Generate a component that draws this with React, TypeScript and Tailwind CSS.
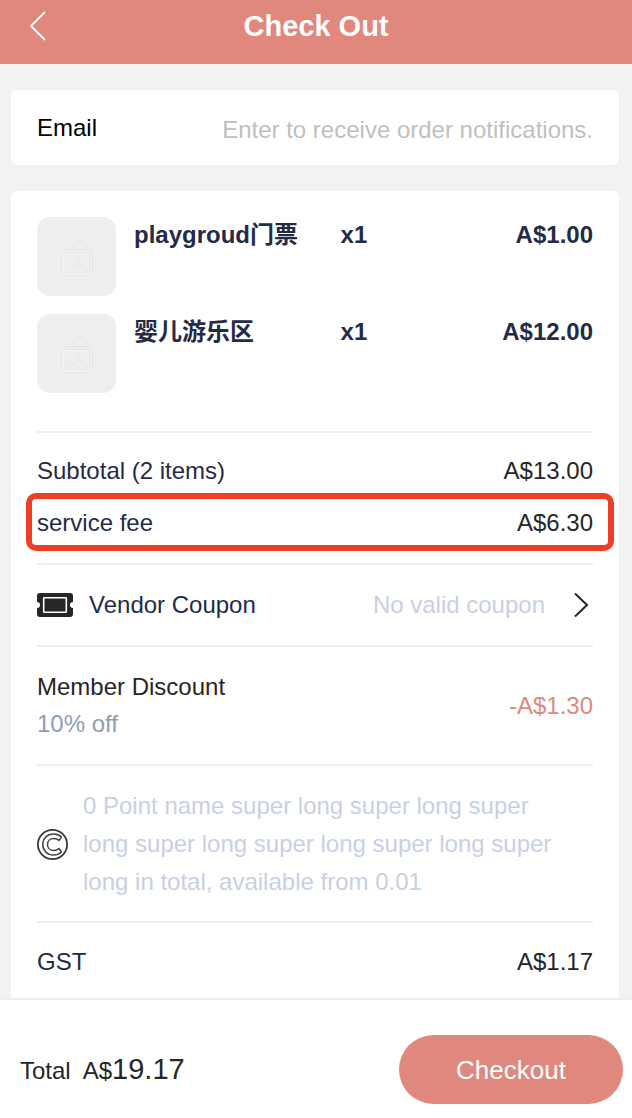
import type { ReactNode } from "react";

type Item = { id: number; name: string; qty: number; price: string };

const items: Item[] = [
  { id: 1, name: "playgroud门票", qty: 1, price: "A$1.00" },
  { id: 2, name: "婴儿游乐区", qty: 1, price: "A$12.00" },
];

function PicturePlaceholder() {
  return (
    <div className="flex h-[79px] w-[79px] shrink-0 items-center justify-center rounded-[13px] bg-[#eeeeee]">
      <svg viewBox="0 0 40 44" className="h-11 w-10" fill="none" stroke="#e6e6e6" strokeWidth="1" aria-hidden="true">
        <circle cx="23" cy="5" r="2" fill="#e8e8e8" stroke="none" />
        <path d="M21 7 L10 14 M25 7 L33 14" />
        <path d="M8 14.500 H35.500 V37" />
        <rect x="4.500" y="17.500" width="28" height="23" />
        <rect x="5.500" y="18.500" width="26" height="21" stroke="#f4f4f4" />
        <circle cx="20.500" cy="24.500" r="2.500" />
        <path d="M12 28 C12 33 17 33 20 30 C23 28 26 29 28 33 L31 39" />
      </svg>
    </div>
  );
}

function CouponIcon() {
  return (
    <svg viewBox="0 0 36 24" className="h-6 w-9 shrink-0" aria-hidden="true">
      <path
        fill="#262626"
        d="M3 0 H33 Q36 0 36 3 V9 A3 3 0 0 0 36 15 V21 Q36 24 33 24 H3 Q0 24 0 21 V15 A3 3 0 0 0 0 9 V3 Q0 0 3 0 Z"
      />
      <rect x="6.700" y="4.700" width="22.600" height="14.600" rx="0.500" fill="none" stroke="#fff" strokeWidth="1.600" />
    </svg>
  );
}

function PointIcon() {
  return (
    <svg viewBox="0 0 31 31" className="h-[31px] w-[31px] shrink-0" fill="none" stroke="#444" aria-hidden="true">
      <circle cx="15.500" cy="15.500" r="14.600" strokeWidth="1.800" stroke="#3a3a3a" />
      <path
        strokeWidth="1.500"
        strokeLinejoin="round"
        d="M24.500 8 C22.500 6 19.800 5 16.500 5 C10 5 5.800 9.500 5.800 15.500 C5.800 21.500 10 26 16.500 26 C19.800 26 22.500 25 24.500 23 L22 19.500 C20.500 21 18.800 21.500 16.800 21.500 C13 21.500 10.500 19 10.500 15.500 C10.500 12 13 9.500 16.800 9.500 C18.800 9.500 20.500 10 22 11.500 Z"
      />
    </svg>
  );
}

function Section({ className = "", children }: { className?: string; children: ReactNode }) {
  return <section className={`border-t-2 border-[#eeeeee] ${className}`}>{children}</section>;
}

export default function App() {
  return (
    <div className="flex min-h-screen flex-col bg-[#f2f2f2] font-['Liberation_Sans','Noto_Sans_CJK_SC',sans-serif] text-[24px] leading-9 text-[#262626]">
      <header className="grid grid-cols-[1fr_auto_1fr] items-center bg-[#e0887d] px-7 pt-2 pb-5 text-white">
        <button type="button" aria-label="Back" className="justify-self-start">
          <svg viewBox="0 0 20 32" className="h-8 w-5" fill="none" stroke="currentColor" strokeWidth="2" aria-hidden="true">
            <path d="M17 2 L3 16 L17 30" />
          </svg>
        </button>
        <h1 className="text-[29px] leading-9 font-bold">Check Out</h1>
      </header>

      <main className="flex flex-1 flex-col gap-[26px] pt-[26px] pr-[13px] pl-[11px]">
        <div className="flex items-start rounded-md bg-white px-[26px] pt-5 pb-[17px]">
          <label htmlFor="email" className="text-black">
            Email
          </label>
          <input
            id="email"
            type="email"
            placeholder="Enter to receive order notifications."
            className="mt-0.5 h-9 min-w-0 flex-1 text-right outline-none placeholder:text-[#bfbfbf]"
          />
        </div>

        <div className="flex-1 rounded-t-md bg-white px-[26px] pt-[26px]">
          <ul className="flex flex-col gap-[18px] pb-[38px] font-bold text-[#252b46]">
            {items.map((item) => (
              <li key={item.id} className="flex gap-[18px]">
                <PicturePlaceholder />
                <div className="flex flex-1 items-start">
                  <span className="w-[45%]">{item.name}</span>
                  <span>x{item.qty}</span>
                  <span className="ml-auto">{item.price}</span>
                </div>
              </li>
            ))}
          </ul>

          <Section className="pt-3 pb-3.5 leading-[52px]">
            <div className="flex justify-between">
              <span className="text-[#252b46]">Subtotal (2 items)</span>
              <span>A$13.00</span>
            </div>
            <div className="relative flex justify-between">
              <span className="text-[#252b46]">service fee</span>
              <span>A$6.30</span>
              {/* highlight frame around the fee */}
              <div className="pointer-events-none absolute -top-1 -right-[21px] -bottom-0.5 -left-[11px] rounded-[10px] border-6 border-[#ec4026]" />
            </div>
          </Section>

          <Section>
            <button type="button" className="flex w-full items-center py-[22px] pr-1 text-left">
              <CouponIcon />
              <span className="ml-4 text-[#252b46]">Vendor Coupon</span>
              <span className="ml-auto text-[#c8d0e3]">No valid coupon</span>
              <svg viewBox="0 0 16 26" className="ml-7 h-[26px] w-4" fill="none" stroke="#262626" strokeWidth="2" aria-hidden="true">
                <path d="M2 1.500 L14 13 L2 24.500" />
              </svg>
            </button>
          </Section>

          <Section className="flex items-center justify-between pt-[21px] pb-[22px] leading-[37px]">
            <div>
              <p>Member Discount</p>
              <p className="text-[#909cbb]">10% off</p>
            </div>
            <span className="text-[#e0887d]">-A$1.30</span>
          </Section>

          <Section className="flex items-center gap-[15px] pt-[21px] pr-6 pb-5">
            <PointIcon />
            <p className="leading-[38px] text-[#c8d0e3]">
              0 Point name super long super long super long super long super long super long super long in total,
              available from 0.01
            </p>
          </Section>

          <Section className="flex justify-between pt-[21px] pb-[18px]">
            <span className="text-[#252b46]">GST</span>
            <span>A$1.17</span>
          </Section>
        </div>
      </main>

      <footer className="sticky bottom-0 flex items-center justify-between border-t-2 border-[#eeeeee] bg-white pt-[35px] pr-[9px] pb-3.5 pl-5">
        <p className="flex items-baseline">
          <span className="mr-3">Total</span>
          <span>A$</span>
          <span className="text-[29px]">19.17</span>
        </p>
        <button type="button" className="h-[69px] w-56 rounded-full bg-[#e0887d] text-[26px] text-white">
          Checkout
        </button>
      </footer>
    </div>
  );
}
